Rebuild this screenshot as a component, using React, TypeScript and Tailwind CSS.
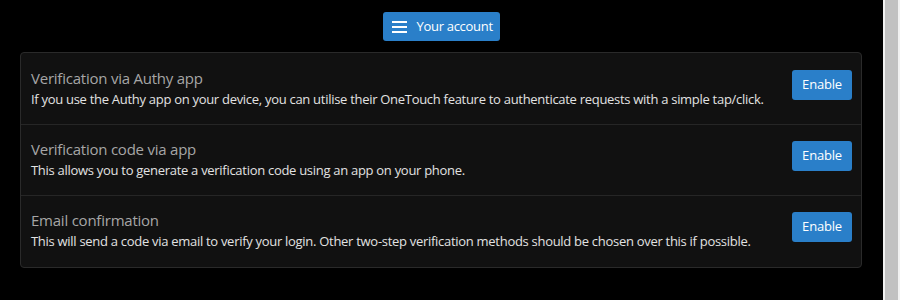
import React from 'react'

const methods = [
  {
    title: 'Verification via Authy app',
    desc: 'If you use the Authy app on your device, you can utilise their OneTouch feature to authenticate requests with a simple tap/click.',
  },
  {
    title: 'Verification code via app',
    desc: 'This allows you to generate a verification code using an app on your phone.',
  },
  {
    title: 'Email confirmation',
    desc: 'This will send a code via email to verify your login. Other two-step verification methods should be chosen over this if possible.',
  },
]

const MenuIcon = () => (
  <svg width="16" height="14" viewBox="0 0 16 14" className="shrink-0">
    <rect x="0" y="1" width="15" height="2" fill="#fff" />
    <rect x="0" y="6" width="15" height="2" fill="#fff" />
    <rect x="0" y="11" width="15" height="2" fill="#fff" />
  </svg>
)

const App = () => {
  return (
    <div className="flex h-[300px] w-[900px] bg-black font-['Open_Sans',sans-serif] overflow-hidden">
      <div className="w-[883px] shrink-0 pl-5 pt-3">
        <div className="flex w-[842px] justify-center">
          <button className="flex h-[29px] w-[117px] items-center gap-[9px] rounded-[3px] bg-[#2a7fc9] pl-[9px] text-[13px] tracking-[-0.3px] text-white">
            <MenuIcon />
            <span>Your account</span>
          </button>
        </div>

        <div className="mt-[11px] w-[842px] rounded-[4px] border border-[#2a2a2a] bg-[#111111] pt-[1px] pb-[1px]">
          {methods.map((m, i) => (
            <div
              key={m.title}
              className={`flex items-start justify-between pl-[10px] pr-[9px] pt-[15px] pb-[15px] ${i > 0 ? 'border-t border-[#262626]' : ''}`}
            >
              <div className="flex flex-col whitespace-nowrap -mt-[1px]">
                <div className="text-[15px] leading-[21px] tracking-[-0.23px] text-[#a6a6a6]">{m.title}</div>
                <div className="text-[13px] leading-[20px] tracking-[-0.29px] text-[#e2e2e2]">{m.desc}</div>
              </div>
              <button className="mt-[1px] h-[30px] w-[60px] shrink-0 rounded-[3px] bg-[#2a7fc9] text-[13px] tracking-[-0.2px] text-white">
                Enable
              </button>
            </div>
          ))}
        </div>
      </div>

      <div className="flex h-full w-[17px] bg-[#f1f1f1] px-[2px]">
        <div className="h-full w-full bg-[#c1c1c1]" />
      </div>
    </div>
  )
}

export default App
